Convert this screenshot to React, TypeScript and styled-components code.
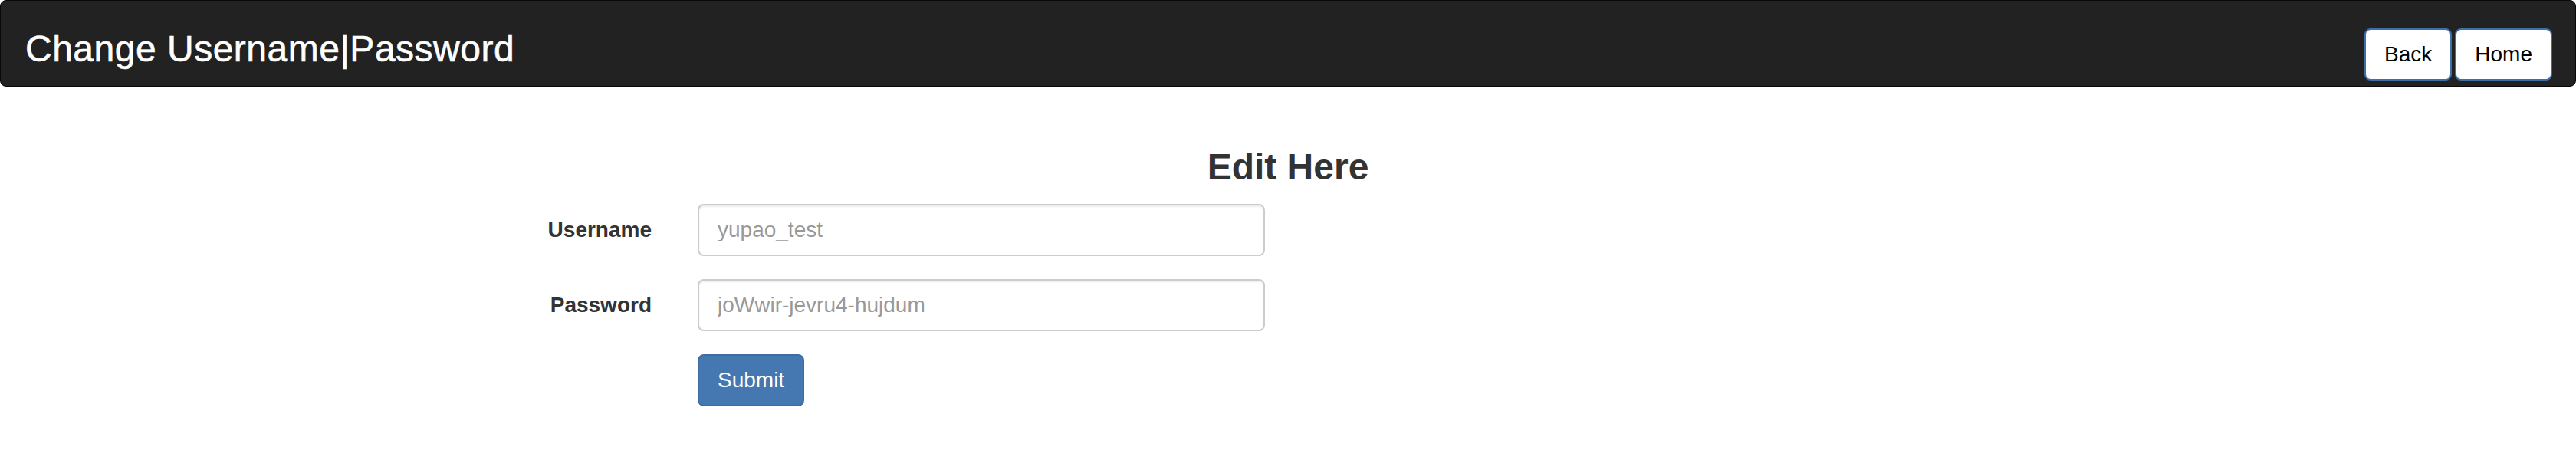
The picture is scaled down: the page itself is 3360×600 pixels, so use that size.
import React from "react";
import styled, { createGlobalStyle } from "styled-components";

const GlobalStyle = createGlobalStyle`
  html, body {
    margin: 0;
    padding: 0;
    background: #ffffff;
    font-family: "Liberation Sans", Arial, Helvetica, sans-serif;
    color: #333333;
  }
  * { box-sizing: border-box; }
`;

const NavBar = styled.header`
  display: flex;
  justify-content: space-between;
  align-items: baseline;
  height: 113px;
  margin: 0;
  padding: 36px 30px 0 32px;
  background: #222222;
  border: 1px solid #080808;
  border-radius: 8px;
`;

const NavTitle = styled.h3`
  margin: 0;
  font-size: 48px;
  line-height: 53px;
  font-weight: 400;
  letter-spacing: 0.5px;
  color: #ffffff;
  -webkit-text-stroke: 0.6px #ffffff;
`;

const NavActions = styled.div`
  display: flex;
  gap: 4px;
  align-items: baseline;
`;

const NavButton = styled.button`
  font-family: inherit;
  font-size: 28px;
  line-height: 40px;
  padding: 12px 24px;
  color: #000000;
  background: #ffffff;
  border: 2px solid #3e6fa6;
  border-radius: 8px;
  cursor: pointer;
`;

const Heading = styled.h3`
  margin: 78px 0 22px 0;
  text-align: center;
  font-size: 48px;
  line-height: 53px;
  font-weight: 700;
  color: #333333;
`;

const Form = styled.form`
  width: 2340px;
  margin: 0 auto;
  display: flex;
  flex-direction: column;
  gap: 30px;
`;

const FormRow = styled.div`
  display: grid;
  grid-template-columns: 400px 800px;
  margin: 0 -30px;
`;

const Label = styled.label`
  padding: 14px 30px 0 30px;
  text-align: right;
  font-size: 28px;
  line-height: 40px;
  font-weight: 700;
  color: #333333;
`;

const Field = styled.div`
  padding: 0 30px;
`;

const Input = styled.input`
  display: block;
  width: 100%;
  height: 68px;
  padding: 12px 24px;
  font-family: inherit;
  font-size: 28px;
  line-height: 40px;
  color: #555555;
  background: #ffffff;
  border: 2px solid #cccccc;
  border-radius: 8px;
  box-shadow: inset 0 2px 2px rgba(0, 0, 0, 0.075);
  outline: none;
  &::placeholder {
    color: #999999;
  }
`;

const SubmitButton = styled.button`
  font-family: inherit;
  font-size: 28px;
  line-height: 40px;
  padding: 12px 24px;
  color: #ffffff;
  background: #4577b0;
  border: 2px solid #3d6ca3;
  border-radius: 8px;
  cursor: pointer;
`;

export default function App() {
  return (
    <>
      <GlobalStyle />
      <NavBar>
        <NavTitle>Change Username|Password</NavTitle>
        <NavActions>
          <NavButton type="button">Back</NavButton>
          <NavButton type="button">Home</NavButton>
        </NavActions>
      </NavBar>
      <Heading>Edit Here</Heading>
      <Form onSubmit={(e) => e.preventDefault()}>
        <FormRow>
          <Label htmlFor="username">Username</Label>
          <Field>
            <Input id="username" type="text" placeholder="yupao_test" />
          </Field>
        </FormRow>
        <FormRow>
          <Label htmlFor="password">Password</Label>
          <Field>
            <Input id="password" type="text" placeholder="joWwir-jevru4-hujdum" />
          </Field>
        </FormRow>
        <FormRow>
          <Label as="div" />
          <Field>
            <SubmitButton type="submit">Submit</SubmitButton>
          </Field>
        </FormRow>
      </Form>
    </>
  );
}
